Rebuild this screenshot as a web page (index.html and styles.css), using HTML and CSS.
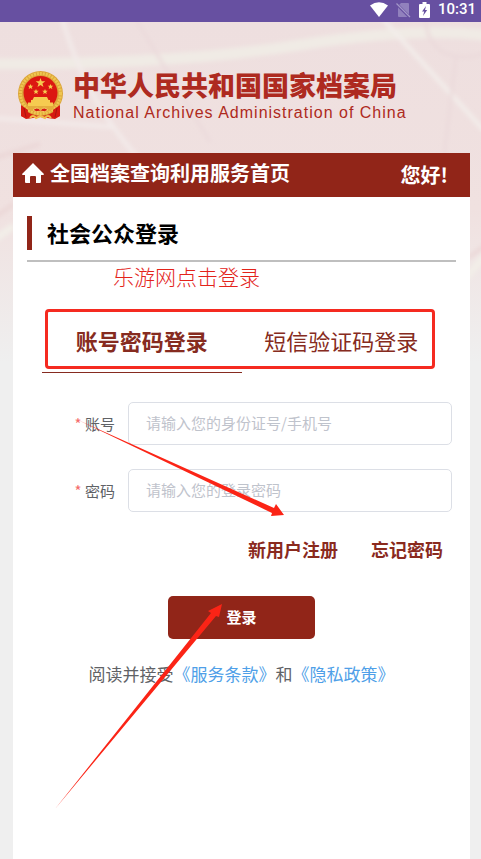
FILE: index.html
```html
<!DOCTYPE html>
<html lang="zh-CN">
<head>
<meta charset="utf-8">
<meta name="viewport" content="width=device-width, initial-scale=1">
<title>社会公众登录</title>
<link rel="stylesheet" href="styles.css">
</head>
<body>
<div class="status">
  <svg class="status-wifi" viewBox="0 0 18 15" aria-hidden="true"><path d="M9 15 0 3.600Q9-3 18 3.600Z" fill="#fff"/></svg>
  <svg class="status-sim" viewBox="0 0 15 16" aria-hidden="true"><path d="M5 1h7q1 0 1 1v12q0 1-1 1H3q-1 0-1-1V4Z" fill="#9181bd"/><path d="M.5 2 14 15.500" stroke="#6750a1" stroke-width="3"/><path d="M.5 1.500 14 15" stroke="#a397c8" stroke-width="1.200"/></svg>
  <svg class="status-battery" viewBox="0 0 11 16" aria-hidden="true"><path d="M3.500 0h4v2H10q1 0 1 1v12q0 1-1 1H1q-1 0-1-1V3q0-1 1-1h2.500Z" fill="#fff"/><path d="M7 4 3 9.500h2.200L4 14l4.200-6H6Z" fill="#6750a1"/></svg>
  <span>10:31</span>
</div>
<div class="page">
  <svg class="backdrop" viewBox="0 0 481 340" preserveAspectRatio="none" aria-hidden="true">
    <defs>
      <linearGradient id="wash" x1="0" y1="0" x2="0" y2="1"><stop offset="0" stop-color="#eedfdf"/><stop offset=".55" stop-color="#f0e1e0"/><stop offset="1" stop-color="#efefef"/></linearGradient>
      <filter id="soft"><feGaussianBlur stdDeviation="2"/></filter>
    </defs>
    <path d="M0 0h481v340H0Z" fill="url(#wash)"/>
    <g filter="url(#soft)" fill="none">
      <path d="M-5 42Q180 42 300 23T490 14" stroke="#f0ebe5" stroke-width="11"/>
      <path d="M62-4Q80 58 112 103T150 140M-5 96 112 105" stroke="#f3ebea" stroke-width="4"/>
      <path d="M382-4 490 115" stroke="#f3eeeb" stroke-width="4"/>
      <path d="M135-4 210 120M425-4Q428 30 455 34T490 25M456 34 444 135" stroke="#ebdadb" stroke-width="3"/>
      <path d="M-5 136 40 122M-5 195 14 182M468 236 490 220" stroke="#ebd7d7" stroke-width="4"/>
      <path d="M466 256 490 228M-5 217 14 204" stroke="#f2eee8" stroke-width="7"/>
    </g>
  </svg>
  <header class="banner">
    <svg class="emblem" viewBox="0 0 47 49" role="img" aria-label="国徽">
      <path d="M5 34 4 45l5 3 14-2 15 2 5-3-1-11Z" fill="#d71912"/>
      <circle cx="23.500" cy="22.500" r="22.500" fill="#dca53a"/>
      <circle cx="23.500" cy="22.500" r="20" fill="none" stroke="#efc650" stroke-width="3" stroke-dasharray="2 1"/>
      <circle cx="23.500" cy="22" r="17" fill="#dc1712"/>
      <g fill="#f6cb50">
        <path d="m23.500 7 1.200 3.300h3.600l-2.900 2.200 1.100 3.500-3-2.100-3 2.100 1.100-3.500-2.900-2.200h3.600Z"/>
        <path d="m13.500 13 .8 1.800h2l-1.600 1.300.6 2-1.800-1.200-1.800 1.200.6-2-1.600-1.300h2ZM33.500 13l.8 1.800h2l-1.600 1.300.6 2-1.800-1.200-1.800 1.200.6-2-1.600-1.300h2ZM19 18l.8 1.800h2l-1.600 1.300.6 2-1.800-1.200-1.800 1.200.6-2-1.600-1.300h2ZM28 18l.8 1.800h2l-1.600 1.300.6 2-1.800-1.200-1.800 1.200.6-2-1.600-1.300h2Z"/>
        <path d="M17 26h13l1.500 3H33v2.500h3V35H11v-3.500h3V29h1.500Z"/>
      </g>
      <path d="M9 35h29l-3 4q-11 4-23 0Z" fill="#e5ad3d"/>
      <path d="M16 39q4-4 7.500 0 3.500-4 7.500 0-3 3-7.500 1-4.500 2-7.500-1Z" fill="#d71912" stroke="#f2cf63"/>
      <path d="M4 34 11 39 10 47 4 45ZM43 34 36 39 37 47 43 45Z" fill="#d71912"/>
      <path d="m7 37 2 9M40 37l-2 9" stroke="#a91310"/>
      <path d="M13 47q3-4 6 0l4.500-2 4.500 2q3-4 6 0" fill="none" stroke="#f0be4b" stroke-width="2"/>
    </svg>
    <div class="brand">
      <h1>中华人民共和国国家档案局</h1>
      <p lang="en">National Archives Administration of China</p>
    </div>
  </header>
  <main class="panel">
    <nav class="topbar">
      <a class="home" href="#">
        <svg viewBox="0 0 22 20" aria-hidden="true"><path d="M11 0 22 11q0 1-1 1h-2v7q0 1-1 1h-4v-6q0-1-1-1H9q-1 0-1 1v6H4q-1 0-1-1v-7H1q-1 0-1-1Z" fill="#fff"/></svg>
        <span>全国档案查询利用服务首页</span>
      </a>
      <span class="hello">您好!</span>
    </nav>
    <section class="content">
      <h2>社会公众登录</h2>
      <form class="login">
        <div class="tabs" role="tablist">
          <button class="tab tab-active" type="button" role="tab" aria-selected="true">账号密码登录</button>
          <button class="tab" type="button" role="tab" aria-selected="false">短信验证码登录</button>
        </div>
        <div class="field">
          <label for="account"><span class="required">*</span> 账号</label>
          <input id="account" type="text" placeholder="请输入您的身份证号/手机号">
        </div>
        <div class="field">
          <label for="password"><span class="required">*</span> 密码</label>
          <input id="password" type="password" placeholder="请输入您的登录密码">
        </div>
        <div class="links"><a href="#">新用户注册</a><a href="#">忘记密码</a></div>
        <button class="submit" type="submit">登录</button>
        <p class="terms">阅读并接受<a href="#">《服务条款》</a>和<a href="#">《隐私政策》</a></p>
      </form>
    </section>
  </main>
  <p class="note">乐游网点击登录</p>
  <div class="marker"></div>
  <svg class="arrows" width="300" height="420" viewBox="0 0 300 420" aria-hidden="true">
    <path d="M78 20 274 108l2-4 8 11-13 1 1-3Z" fill="#fb2416"/>
    <path d="M55 409 211 213l-3-2 14-7-3 13-3-1Z" fill="#fb2416"/>
  </svg>
</div>
</body>
</html>
```
FILE: styles.css
```css
* {
  box-sizing: border-box;
}

body {
  margin: 0;
  min-height: 100vh;
  display: flex;
  flex-direction: column;
  background: #efefef;
  font-family: "Noto Sans CJK SC", sans-serif;
  color: #606266;
}

h1, h2, p {
  margin: 0;
}

a {
  text-decoration: none;
}

button, input {
  font-family: inherit;
}

.status {
  height: 22px;
  padding: 0 5px 3px;
  display: flex;
  align-items: center;
  justify-content: flex-end;
  background: #6750a1;
  color: #fff;
  font: 500 15px/19px Roboto, sans-serif;
}

.status-wifi {
  width: 18px;
  height: 15px;
  margin-right: 8px;
}

.status-sim {
  width: 15px;
  height: 16px;
  margin-right: 8px;
}

.status-battery {
  width: 11px;
  height: 16px;
  margin-right: 8px;
}

.page {
  position: relative;
  flex: 1;
  display: flex;
  flex-direction: column;
}

.backdrop {
  position: absolute;
  inset: 0 0 auto;
  width: 100%;
  height: 340px;
}

.banner {
  position: relative;
  padding: 45px 17px 30px;
  display: flex;
  align-items: center;
  gap: 9px;
}

.emblem {
  width: 47px;
  height: 49px;
  flex: none;
}

.brand {
  color: #ae2a20;
  white-space: nowrap;
}

.brand h1 {
  font-size: 27px;
  line-height: 36px;
  font-weight: 900;
}

.brand p {
  font: 16px/20px "Liberation Sans", sans-serif;
  letter-spacing: 1px;
}

.panel {
  position: relative;
  flex: 1;
  margin: 0 11px 0 13px;
  background: #fff;
}

.topbar {
  height: 44px;
  padding: 0 22px 0 9px;
  display: flex;
  align-items: center;
  justify-content: space-between;
  background: #912518;
  color: #fff;
  font-size: 20px;
  font-weight: 700;
  line-height: 40px;
}

.home {
  display: flex;
  align-items: center;
  gap: 6px;
  padding-bottom: 4px;
  color: inherit;
}

.home svg {
  width: 22px;
  height: 20px;
}

.content {
  padding: 19px 14px;
}

h2 {
  padding-bottom: 10px;
  border-bottom: 2px solid #bfbfbf;
  display: flex;
  align-items: flex-start;
  gap: 15px;
  color: #000;
  font-size: 22px;
  font-weight: 700;
  line-height: 32px;
}

h2::before {
  content: "";
  width: 5px;
  height: 34px;
  background: #912518;
}

.login {
  margin-top: 50px;
  display: flex;
  flex-direction: column;
}

.tabs {
  margin: 0 15px 29px;
  display: grid;
  grid-template-columns: 1fr 1fr;
}

.tab {
  height: 61px;
  padding: 0 0 4px;
  border: 0;
  border-bottom: 1px solid transparent;
  background: none;
  color: #862b20;
  font-size: 22px;
  font-weight: 400;
  white-space: nowrap;
}

.tab-active {
  border-color: #862b20;
  font-weight: 700;
}

.field {
  margin: 0 4px 24px 0;
  display: grid;
  grid-template-columns: 88px 1fr;
  align-items: center;
  gap: 13px;
  font-size: 15px;
}

.field label {
  text-align: right;
}

.required {
  color: #f56c6c;
}

.field input {
  width: 100%;
  height: 43px;
  padding: 0 17px 2px;
  border: 1px solid #dcdfe6;
  border-radius: 5px;
  background: #fff;
  color: #606266;
  font-size: 15px;
}

.field input::placeholder {
  color: #bfc3cc;
}

.links {
  padding-right: 13px;
  display: flex;
  justify-content: flex-end;
  gap: 33px;
  font-size: 18px;
  font-weight: 700;
  line-height: 26px;
}

.links a {
  color: #8a2a1e;
}

.submit {
  width: 147px;
  height: 43px;
  margin: 34px auto 22px;
  padding: 0 0 2px;
  border: 0;
  border-radius: 5px;
  background: #912518;
  color: #fff;
  font-size: 15px;
  font-weight: 700;
}

.terms {
  font-size: 17px;
  line-height: 26px;
  text-align: center;
}

.terms a {
  color: #4f9fe8;
}

.note {
  position: absolute;
  top: 239px;
  left: 113px;
  color: #e3231a;
  font-size: 21px;
  font-weight: 300;
  line-height: 30px;
}

.marker {
  position: absolute;
  top: 287px;
  left: 45px;
  width: 390px;
  height: 60px;
  border: 3px solid #f52a20;
  border-radius: 4px;
  pointer-events: none;
}

.arrows {
  position: absolute;
  top: 378px;
  left: 0;
  pointer-events: none;
}
```
